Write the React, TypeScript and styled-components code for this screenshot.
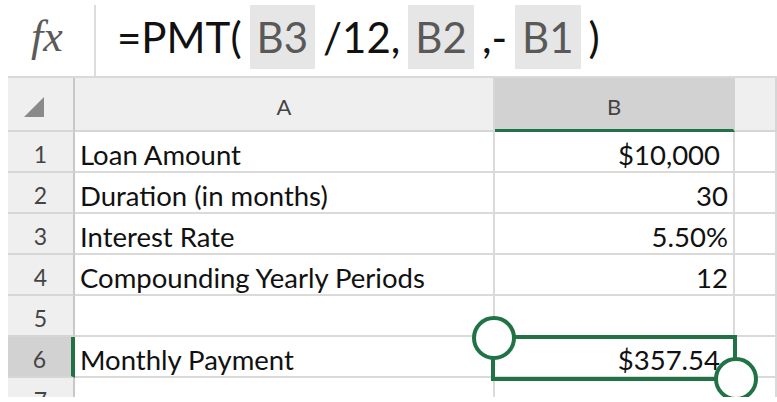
import React from "react";
import styled, { createGlobalStyle } from "styled-components";

const GREEN = "#217346";

const GlobalStyle = createGlobalStyle`
  html, body {
    margin: 0;
    padding: 0;
    background: #fff;
  }
  body {
    font-family: Lato, "Open Sans", sans-serif;
  }
`;

const Page = styled.div`
  position: relative;
  width: 777px;
  height: 402px;
  padding-left: 8px;
  box-sizing: border-box;
  overflow: hidden;
  background: #fff;
`;

const FormulaBar = styled.div`
  display: flex;
  height: 78px;
  box-sizing: border-box;
  border-bottom: 2px solid #d9d9d9;
`;

const FxBox = styled.div`
  width: 88px;
  margin-top: 5px;
  box-sizing: border-box;
  border-right: 2px solid #dcdcdc;
  display: flex;
  align-items: center;
  justify-content: center;
  padding: 0 8px 8px 0;
  font-family: "Liberation Serif", serif;
  font-style: italic;
  font-size: 44px;
  color: #5a5a5a;
`;

const Formula = styled.div`
  display: flex;
  align-items: flex-start;
  gap: 8px;
  padding-left: 21px;
  font-size: 42px;
  color: #111;
`;

const Plain = styled.span`
  height: 64px;
  margin-top: 5px;
  display: flex;
  align-items: center;
`;

const Ref = styled(Plain)`
  padding: 0 7px;
  background: #e6e6e6;
  color: #595959;
`;

const Sheet = styled.div`
  position: relative;
  height: 319px;
  overflow: hidden;
`;

const Grid = styled.div`
  display: grid;
  grid-template-columns: 67px 420px 240px 1fr;
  grid-template-rows: 54px;
  grid-auto-rows: 41px;
`;

const Cell = styled.div<{ $align?: "left" | "right"; $pad?: number }>`
  box-sizing: border-box;
  border-right: 2px solid #dadada;
  border-bottom: 2px solid #dadada;
  display: flex;
  align-items: flex-end;
  justify-content: ${(p) => (p.$align === "right" ? "flex-end" : "flex-start")};
  padding: 0 ${(p) => p.$pad ?? 5}px 0 5px;
  font-size: 27.5px;
  line-height: 1.2;
  color: #111;
  white-space: nowrap;
`;

const ColHead = styled.div<{ $selected?: boolean }>`
  box-sizing: border-box;
  background: ${(p) => (p.$selected ? "#d2d2d2" : "#efefef")};
  border-right: 2px solid ${(p) => (p.$selected ? "#d2d2d2" : "#d6d6d6")};
  border-bottom: ${(p) => (p.$selected ? `3px solid ${GREEN}` : "2px solid #d6d6d6")};
  display: flex;
  align-items: center;
  justify-content: center;
  padding-top: 5px;
  font-size: 22px;
  color: #444;
`;

const Corner = styled(ColHead)`
  justify-content: flex-start;
  align-items: flex-end;
  padding: 0 0 13px 16px;
  border-right-color: #c8c8c8;
`;

const RowHead = styled.div<{ $selected?: boolean }>`
  box-sizing: border-box;
  background: ${(p) => (p.$selected ? "#d2d2d2" : "#efefef")};
  border-right: ${(p) => (p.$selected ? `4px solid ${GREEN}` : "2px solid #c8c8c8")};
  border-bottom: 2px solid #d6d6d6;
  display: flex;
  align-items: flex-end;
  justify-content: center;
  padding-bottom: 2px;
  font-size: 23px;
  line-height: 1.2;
  color: #444;
`;

const Selection = styled.div`
  position: absolute;
  left: 483px;
  top: 257px;
  width: 246px;
  height: 46px;
  box-sizing: border-box;
  border: 4px solid ${GREEN};
  pointer-events: none;
`;

const Handle = styled.div<{ $x: number; $y: number }>`
  position: absolute;
  left: ${(p) => p.$x - 22}px;
  top: ${(p) => p.$y - 22}px;
  width: 44px;
  height: 44px;
  box-sizing: border-box;
  border-radius: 50%;
  border: 4px solid ${GREEN};
  background: #fff;
`;

const rows: { label: string; value: string; currency?: boolean }[] = [
  { label: "Loan Amount", value: "$10,000", currency: true },
  { label: "Duration (in months)", value: "30" },
  { label: "Interest Rate", value: "5.50%" },
  { label: "Compounding Yearly Periods", value: "12" },
  { label: "", value: "" },
  { label: "Monthly Payment", value: "$357.54", currency: true },
  { label: "", value: "" },
];

const CornerMark = () => (
  <svg width="20" height="20" viewBox="0 0 20 20">
    <polygon points="20,0 20,20 0,20" fill="#8a8a8a" />
  </svg>
);

export default function App() {
  return (
    <>
      <GlobalStyle />
      <Page>
        <FormulaBar>
          <FxBox>fx</FxBox>
          <Formula>
            <Plain>=PMT(</Plain>
            <Ref>B3</Ref>
            <Plain>/12,</Plain>
            <Ref>B2</Ref>
            <Plain>,-</Plain>
            <Ref>B1</Ref>
            <Plain>)</Plain>
          </Formula>
        </FormulaBar>
        <Sheet>
          <Grid>
            <Corner>
              <CornerMark />
            </Corner>
            <ColHead>A</ColHead>
            <ColHead $selected>B</ColHead>
            <ColHead />
            {rows.map((r, i) => (
              <React.Fragment key={i}>
                <RowHead $selected={i === 5}>{i + 1}</RowHead>
                <Cell>{r.label}</Cell>
                <Cell $align="right" $pad={r.currency ? 13 : 5}>
                  {r.value}
                </Cell>
                <Cell />
              </React.Fragment>
            ))}
          </Grid>
          <Selection />
          <Handle $x={486} $y={260} />
          <Handle $x={727.5} $y={301} />
        </Sheet>
      </Page>
    </>
  );
}
